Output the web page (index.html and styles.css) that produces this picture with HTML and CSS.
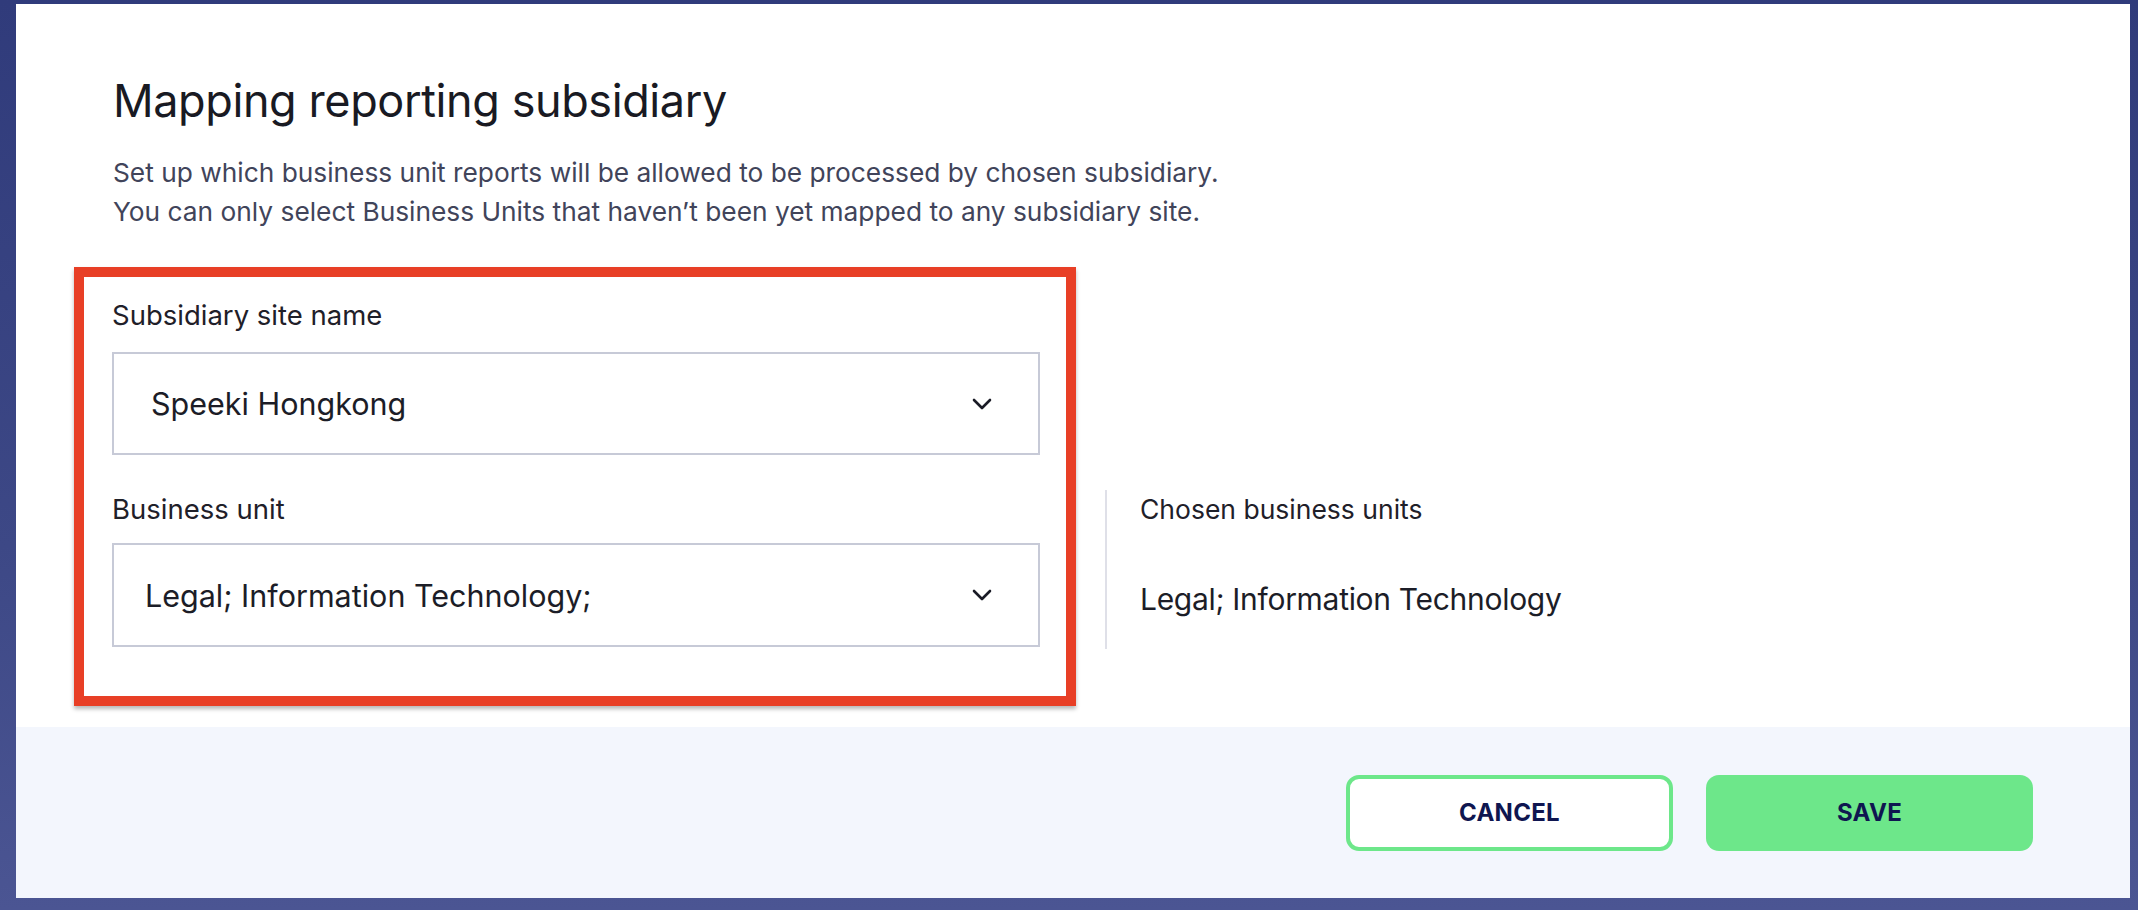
FILE: index.html
```html
<!DOCTYPE html>
<html lang="en">
<head>
<meta charset="utf-8">
<title>Mapping reporting subsidiary</title>
<link rel="stylesheet" href="styles.css">
</head>
<body>
<div class="frame">
  <div class="modal">
    <div class="modal-body">
      <h1 class="title">Mapping reporting subsidiary</h1>
      <p class="subtitle">Set up which business unit reports will be allowed to be processed by chosen subsidiary.<br>You can only select Business Units that haven’t been yet mapped to any subsidiary site.</p>
      <div class="form-row">
        <div class="highlight">
          <label class="field-label">Subsidiary site name</label>
          <div class="select select--site">
            <span class="select-value">Speeki Hongkong</span>
            <svg class="chevron" width="20" height="12" viewBox="0 0 20 12"><path d="M2 2 L10 10 L18 2" fill="none" stroke="#1a1b26" stroke-width="2.6" stroke-linecap="round" stroke-linejoin="round"/></svg>
          </div>
          <label class="field-label field-label--second">Business unit</label>
          <div class="select select--unit">
            <span class="select-value">Legal; Information Technology;</span>
            <svg class="chevron" width="20" height="12" viewBox="0 0 20 12"><path d="M2 2 L10 10 L18 2" fill="none" stroke="#1a1b26" stroke-width="2.6" stroke-linecap="round" stroke-linejoin="round"/></svg>
          </div>
        </div>
        <div class="chosen">
          <div class="chosen-label">Chosen business units</div>
          <div class="chosen-value">Legal; Information Technology</div>
        </div>
      </div>
    </div>
    <div class="modal-footer">
      <button class="btn btn--outline">CANCEL</button>
      <button class="btn btn--solid">SAVE</button>
    </div>
  </div>
</div>
</body>
</html>
```
FILE: styles.css
```css
html, body {
  margin: 0;
  padding: 0;
}

body {
  width: 2138px;
  height: 910px;
  background: linear-gradient(180deg, #303b7b 0%, #3d4886 60%, #4b5593 100%);
  font-family: "Inter", "Liberation Sans", sans-serif;
  overflow: hidden;
}

.frame {
  box-sizing: border-box;
  height: 910px;
  padding: 4px 8px 12px 16px;
}

.modal {
  height: 100%;
  display: flex;
  flex-direction: column;
  background: #ffffff;
}

.modal-body {
  flex: 1;
  padding: 69px 0 0 97px;
}

.title {
  margin: 0;
  font-size: 45px;
  line-height: 56px;
  font-weight: 400;
  color: #191a23;
  letter-spacing: -0.4px;
}

.subtitle {
  margin: 24px 0 0;
  font-size: 26.3px;
  line-height: 39px;
  color: #41445a;
}

.form-row {
  display: flex;
  align-items: flex-end;
  margin: 36px 0 0 -39px;
}

.highlight {
  box-sizing: border-box;
  width: 1002px;
  border: 10px solid #e83f26;
  padding: 23px 26px 49px 28px;
  box-shadow: 0 3px 4px rgba(0, 0, 0, 0.28);
}

.field-label {
  display: block;
  font-size: 27.5px;
  line-height: 30px;
  color: #1f2029;
}

.field-label--second {
  margin-top: 39px;
}

.select {
  box-sizing: border-box;
  height: 103px;
  margin-top: 22px;
  border: 2px solid #c7cad7;
  display: flex;
  align-items: center;
  justify-content: space-between;
  padding-right: 46px;
}

.select--site {
  padding-left: 37px;
}

.select--unit {
  height: 104px;
  margin-top: 19px;
  padding-left: 31px;
}

.select-value {
  font-size: 30.5px;
  color: #1c1d27;
}

.chevron {
  display: block;
}

.chosen {
  margin: 0 0 57px 29px;
  border-left: 2px solid #dfe0e8;
  padding: 4px 0 32px 33px;
}

.chosen-label {
  font-size: 26.5px;
  line-height: 30px;
  color: #1f2029;
}

.chosen-value {
  margin-top: 57px;
  font-size: 30px;
  line-height: 36px;
  color: #1c1d27;
  letter-spacing: -0.3px;
}

.modal-footer {
  height: 171px;
  background: #f3f6fd;
  display: flex;
  align-items: center;
  justify-content: flex-end;
  gap: 33px;
  padding-right: 97px;
}

.btn {
  box-sizing: border-box;
  width: 327px;
  height: 76px;
  border-radius: 13px;
  font-family: "Inter", "Liberation Sans", sans-serif;
  font-size: 24px;
  font-weight: 700;
  color: #0f1650;
  letter-spacing: 0.3px;
  cursor: pointer;
}

.btn--outline {
  background: #ffffff;
  border: 4px solid #6de78a;
}

.btn--solid {
  background: #6de78a;
  border: none;
}
```
